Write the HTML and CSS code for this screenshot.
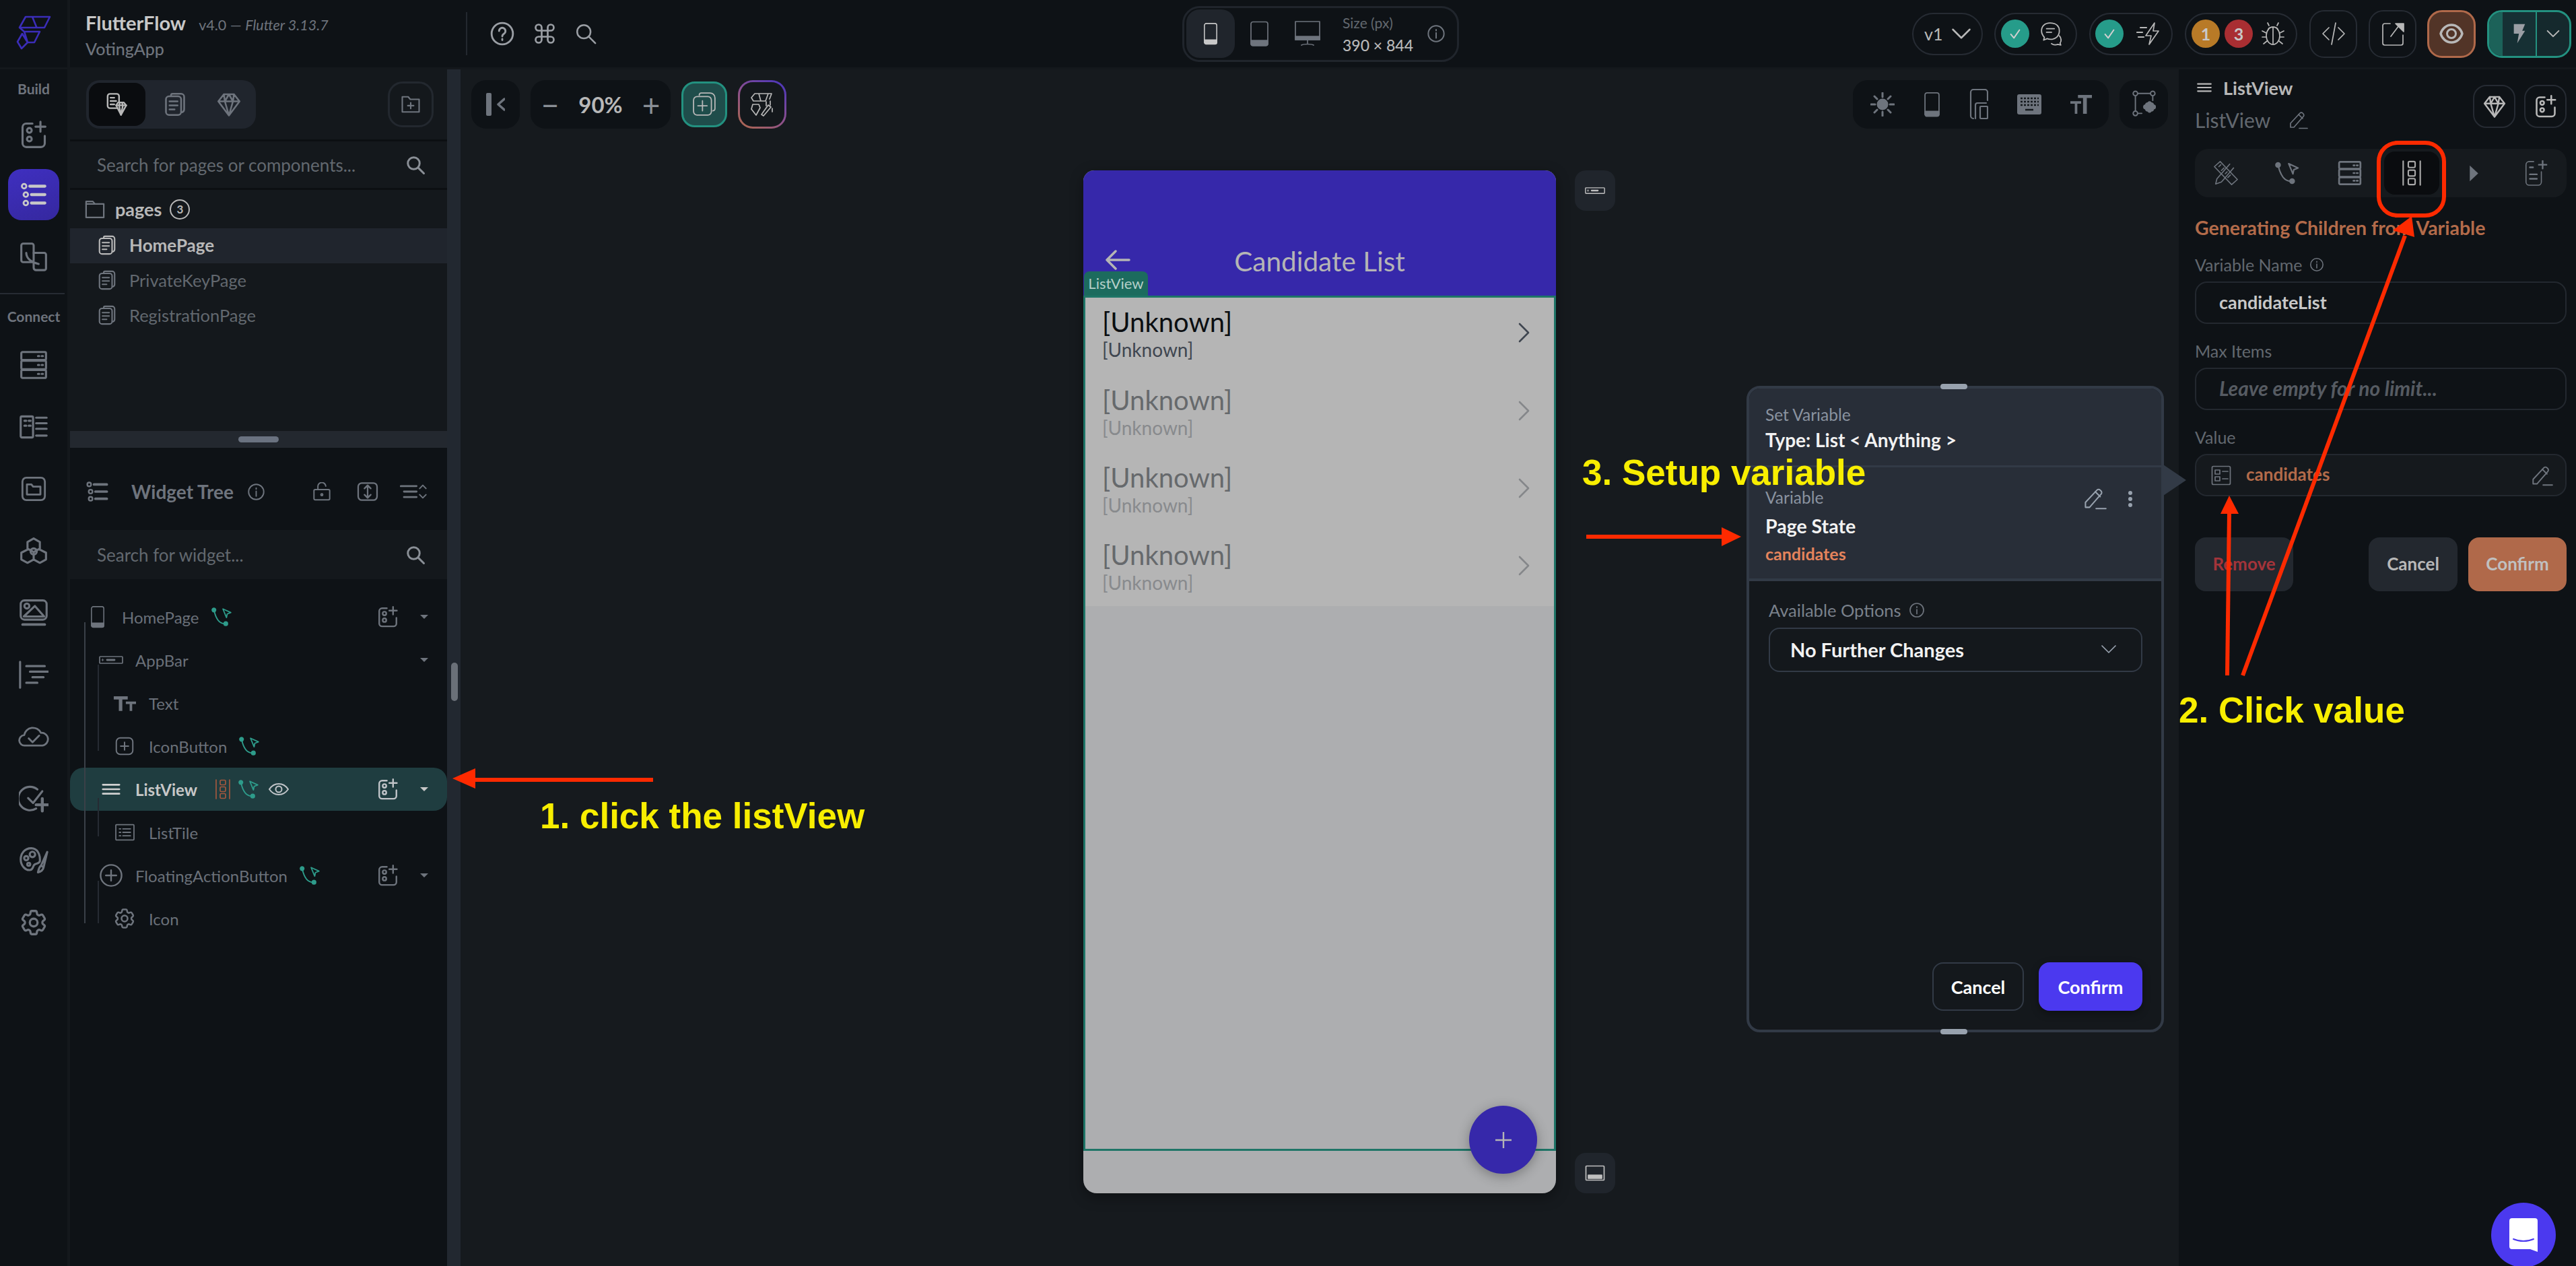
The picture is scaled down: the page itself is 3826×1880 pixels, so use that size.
FILE: index.html
```html
<!DOCTYPE html>
<html lang="en">
<head>
  <meta charset="UTF-8">
  <title>FlutterFlow - VotingApp</title>
  <link rel="stylesheet" href="styles.css">
</head>
<body>

<!-- icon set -->
<svg class="sprite" xmlns="http://www.w3.org/2000/svg">
  <symbol id="i-add" viewBox="0 0 24 24"><path d="M11 3H6a3 3 0 0 0-3 3v13a3 3 0 0 0 3 3h12a3 3 0 0 0 3-3v-6"/><path d="M17.5 1.5v8M13.5 5.5h8"/><circle cx="8.5" cy="8.5" r="1.9"/><circle cx="8.5" cy="15.5" r="1.9"/></symbol>
  <symbol id="i-listdots" viewBox="0 0 24 24"><circle cx="3.5" cy="4.5" r="2"/><circle cx="5" cy="12" r="2"/><circle cx="5" cy="19.5" r="2"/><path d="M8.5 4.5H22M10 12h12M10 19.5h12" stroke-width="2.6"/></symbol>
  <symbol id="i-board" viewBox="0 0 24 24"><rect x="2" y="1.5" width="10" height="15" rx="1.5"/><path d="M12 9h8.5a1.5 1.5 0 0 1 1.5 1.5v11a1.5 1.5 0 0 1-1.5 1.5H14a2 2 0 0 1-2-2v-4"/><path d="M6 9c0 5 5 8 10 9"/></symbol>
  <symbol id="i-db" viewBox="0 0 24 24"><rect x="2" y="1.5" width="20" height="6.5" rx="1"/><rect x="2" y="8.5" width="20" height="7" rx="1"/><rect x="2" y="16" width="20" height="6.5" rx="1"/><path d="M15.5 4.8h1M18.5 4.8h1M15.5 12h1M18.5 12h1M15.5 19.2h1M18.5 19.2h1"/></symbol>
  <symbol id="i-form" viewBox="0 0 24 24"><rect x="1.5" y="3.5" width="10" height="17" rx="1"/><path d="M4.500 7h1.5M8 7h1.5M4.500 11h1.5M8 11h1.5M14 4.500h8.5M14 9h8.5M14 13.5h8.5M14 19h8.5"/></symbol>
  <symbol id="i-folderbox" viewBox="0 0 24 24"><rect x="2" y="2" width="20" height="20" rx="3.5"/><path d="M6 8h4l1.5 2H18v7H6z"/></symbol>
  <symbol id="i-hex" viewBox="0 0 24 24"><path d="M12 2l5 2.8v5.400l-5 2.8-5-2.8V4.8zM7 11l-5 2.5v5.500l5 2.700 5-2.700M17 11l5 2.5v5.500l-5 2.700-5-2.700v-5.500"/><circle cx="12" cy="12.5" r="2.5"/></symbol>
  <symbol id="i-image" viewBox="0 0 24 24"><rect x="1.5" y="2" width="21" height="15.5" rx="3"/><circle cx="6.5" cy="6.5" r="2"/><path d="M4 15L13 6.5 20.5 15z"/><path d="M3 21.5h18" stroke-width="2"/></symbol>
  <symbol id="i-align" viewBox="0 0 24 24"><path d="M1 1.5v21M6 5h15M9 9.5h15M11 14h9M6 18.5h9"/></symbol>
  <symbol id="i-cloud" viewBox="0 0 28 24"><path d="M7 20H6a4.700 4.700 0 0 1-.6-9.400A8 8 0 0 1 20.5 8.5a5.8 5.8 0 0 1 1.5 11.5z"/><path d="M9.5 13.5l3.5 3.5 6-6"/></symbol>
  <symbol id="i-checkplus" viewBox="0 0 24 24"><path d="M15 4.5A9.5 9.5 0 1 0 14 20"/><path d="M7.5 11.5l4 4L19 6"/><path d="M19 12v10M14 17h10" stroke-width="2.4"/></symbol>
  <symbol id="i-palette" viewBox="0 0 24 24"><path d="M10 2C4.5 2 1.5 6.5 1.5 11c0 5 4 9.5 8 8.5 2.5-.6 1.5-3.5 3.5-4.5s3.5-.5 4-2.5C17.5 7 15 2 10 2z"/><circle cx="11" cy="7" r="2.2"/><circle cx="6" cy="10" r="1.7"/><circle cx="8" cy="15" r="1.2"/><path d="M23 5l-5 11 2 1.5zM18 16c-1.5 1-2 3-2.5 5.500 2-.5 4-1.5 4.500-4"/></symbol>
  <symbol id="i-gear" viewBox="0 0 24 24"><path d="M9.594 3.94c.09-.542.56-.94 1.11-.94h2.593c.55 0 1.02.398 1.11.94l.213 1.281c.063.374.313.686.645.87.074.04.147.083.22.127.324.196.72.257 1.075.124l1.217-.456a1.125 1.125 0 011.37.49l1.296 2.247a1.125 1.125 0 01-.26 1.431l-1.003.827c-.293.24-.438.613-.431.992a6.759 6.759 0 010 .255c-.007.378.138.75.43.99l1.005.828c.424.35.534.954.26 1.43l-1.298 2.247a1.125 1.125 0 01-1.369.491l-1.217-.456c-.355-.133-.75-.072-1.076.124a6.57 6.57 0 01-.22.128c-.331.183-.581.495-.644.869l-.213 1.28c-.09.543-.56.941-1.11.941h-2.594c-.55 0-1.02-.398-1.11-.94l-.213-1.281c-.062-.374-.312-.686-.644-.87a6.52 6.52 0 01-.22-.127c-.325-.196-.72-.257-1.076-.124l-1.217.456a1.125 1.125 0 01-1.369-.49l-1.297-2.247a1.125 1.125 0 01.26-1.431l1.004-.827c.292-.24.437-.613.43-.992a6.932 6.932 0 010-.255c.007-.378-.138-.75-.43-.99l-1.004-.828a1.125 1.125 0 01-.26-1.43l1.297-2.247a1.125 1.125 0 011.37-.491l1.216.456c.356.133.751.072 1.076-.124.072-.044.146-.087.22-.128.332-.183.582-.495.644-.869l.214-1.281z"/><circle cx="12" cy="12" r="3"/></symbol>
  <symbol id="i-search" viewBox="0 0 24 24"><circle cx="10" cy="10" r="7"/><path d="M15.5 15.5L22 22"/></symbol>
  <symbol id="i-info" viewBox="0 0 24 24"><circle cx="12" cy="12" r="10"/><path d="M12 11v6.5M12 6.8v1.4"/></symbol>
  <symbol id="i-help" viewBox="0 0 24 24"><circle cx="12" cy="12" r="10"/><path d="M9 9.5a3 3 0 1 1 4.5 2.6c-1 .6-1.5 1.2-1.5 2.4M12 17v1"/></symbol>
  <symbol id="i-cmd" viewBox="0 0 24 24"><path d="M9 9h6v6H9zM9 9V6a3 3 0 1 0-3 3zM15 9h3a3 3 0 1 0-3-3zM9 15H6a3 3 0 1 0 3 3zM15 15v3a3 3 0 1 0 3-3z"/></symbol>
  <symbol id="i-pagegem" viewBox="0 0 24 24"><rect x="2" y="1" width="12" height="15" rx="2.5"/><path d="M5 5h4M5 8.5h6M5 12h4"/><path class="fill-bg" d="M11 13l2-3h6l2.5 3-5.5 10z"/><path d="M11 13h10.5M15 10l-1 3 2 10 2-10-1-3"/></symbol>
  <symbol id="i-pages" viewBox="0 0 24 24"><path d="M8 3.5V3a1.5 1.5 0 0 1 1.5-1.5H18a3 3 0 0 1 3 3V17a3 3 0 0 1-2 2.8"/><rect x="3" y="4" width="15" height="18.5" rx="3"/><path d="M6.5 9h8M6.5 13h8M6.5 17h5"/></symbol>
  <symbol id="i-gem" viewBox="0 0 24 24"><path d="M7 2h10l5.5 7L12 23 1.5 9zM1.5 9h21M7 2l1 7 4 14 4-14 1-7M8 9l4-7 4 7"/></symbol>
  <symbol id="i-folderplus" viewBox="0 0 24 24"><path d="M2 3h7l2.5 3H22v15H2z"/><path d="M12 10v7M8.5 13.5h7"/></symbol>
  <symbol id="i-folder" viewBox="0 0 24 24"><path d="M1.5 2.5h8l2.5 3h10.5v16h-21z"/><path d="M1.5 5.5H12"/></symbol>
  <symbol id="i-lock" viewBox="0 0 24 24"><path d="M7 9V6a5 5 0 0 1 10-1"/><rect x="2" y="9.5" width="20" height="13" rx="1.5"/><circle cx="12" cy="16" r="1.2"/></symbol>
  <symbol id="i-expand" viewBox="0 0 24 24"><rect x="1.5" y="2.5" width="21" height="19" rx="4"/><path d="M12 5v14M8.5 8.5L12 5l3.5 3.5M8.5 15.5L12 19l3.5-3.5"/></symbol>
  <symbol id="i-collapse" viewBox="0 0 34 24"><path d="M1 5h20M5 12h16M5 19h16" stroke-width="2.4"/><path d="M25 8l4-4 4 4M25 16l4 4 4-4"/></symbol>
  <symbol id="i-phone" viewBox="0 0 24 36"><rect x="2" y="1.5" width="20" height="33" rx="3"/><path class="fill-cur" d="M2 28h20v4a3 3 0 0 1-3 3H5a3 3 0 0 1-3-3z"/></symbol>
  <symbol id="i-appbar" viewBox="0 0 36 12"><rect x="1" y="1" width="34" height="10" rx="1"/><path d="M12 6h11" stroke-width="2.8"/><path d="M4 6h3M5.5 4.5v3" stroke-width="1"/></symbol>
  <symbol id="i-text" viewBox="0 0 36 24"><path class="fill-cur" stroke="none" d="M1 1h22v5h-8.5v18h-5.5V6H1zM20 9h16v4h-6v11h-4V13h-6z"/></symbol>
  <symbol id="i-plusbox" viewBox="0 0 24 24"><rect x="1.5" y="1.5" width="21" height="21" rx="5"/><path d="M12 7v10M7 12h10"/></symbol>
  <symbol id="i-pluscircle" viewBox="0 0 24 24"><circle cx="12" cy="12" r="11"/><path d="M12 6.5v11M6.5 12h11"/></symbol>
  <symbol id="i-lines" viewBox="0 0 24 18"><path d="M1 3h22M1 9h22M1 15h22" stroke-width="2.4"/></symbol>
  <symbol id="i-listgen" viewBox="0 0 24 30"><path d="M2 1v28M22 1v28"/><rect x="8" y="1.5" width="8" height="7" rx="1.5"/><rect x="8" y="11.5" width="8" height="7" rx="1.5"/><rect x="8" y="21.5" width="8" height="7" rx="1.5"/></symbol>
  <symbol id="i-connect" viewBox="0 0 30 26"><circle class="fill-cur" cx="3.5" cy="3.5" r="2.5"/><circle class="fill-cur" cx="20" cy="22.5" r="2.5"/><path d="M4 5c1 5 2.5 9 5.5 13 2 2.5 5 4.5 9 4.5"/><path d="M16 2l11 5-5 2-1 5z"/></symbol>
  <symbol id="i-eye" viewBox="0 0 30 20"><path d="M1 10c4-6 9-8 14-8s10 2 14 8c-4 6-9 8-14 8S5 16 1 10z"/><circle cx="15" cy="10" r="4.5"/></symbol>
  <symbol id="i-listtile" viewBox="0 0 28 24"><rect x="1" y="1" width="26" height="22" rx="1"/><path d="M6 7h2M6 12h2M6 17h2M11 7h11M11 12h11M11 17h11"/></symbol>
  <symbol id="i-edit" viewBox="0 0 28 28"><path d="M2 25v-6L16 4a2.8 2.8 0 0 1 4 0l1 1a2.8 2.8 0 0 1 0 4L7 25z"/><path d="M14 6l6 6M15 26.5h12"/></symbol>
  <symbol id="i-check" viewBox="0 0 24 24"><path d="M5 13l5 6 9-13"/></symbol>
  <symbol id="i-chat" viewBox="0 0 34 34"><path d="M15 2C7 2 3 7 3 13c0 4 2 7 4 9l-1 4 5-2c2 1 3 1 5 1 7 0 12-5 12-12C28 6 23 2 15 2z"/><path d="M10 10h11M10 15h7"/><path d="M28 20c3 3 3 8 1 10l1 3-4-1c-3 1-6 1-9-1"/></symbol>
  <symbol id="i-bolt" viewBox="0 0 36 34"><path d="M27 1L14 20h8l-3 13 14-20h-8z"/><path d="M6 8h9M1 15h8M3 22h8" stroke-width="2.2"/></symbol>
  <symbol id="i-bug" viewBox="0 0 34 36"><ellipse cx="17" cy="21" rx="10" ry="13"/><path d="M17 9v25M10 12c0-5 14-5 14 0M11 6L9 2M23 6l2-4M7 17l-6-3M27 17l6-3M7 23H1M27 23h6M8 29l-5 4M26 29l5 4"/></symbol>
  <symbol id="i-code" viewBox="0 0 36 36"><path d="M11 9L2 18l9 9M25 9l9 9-9 9M21 2l-6 32"/></symbol>
  <symbol id="i-share" viewBox="0 0 36 36"><path d="M14 3H6a3 3 0 0 0-3 3v26a3 3 0 0 0 3 3h24a3 3 0 0 0 3-3V20"/><path d="M15 22L27 6"/><path class="fill-cur" d="M22 3h12v12z"/></symbol>
  <symbol id="i-watch" viewBox="0 0 36 36"><path d="M18 5c8 0 14 6 16 13-2 7-8 13-16 13S4 25 2 18C4 11 10 5 18 5z" stroke-width="3.5"/><circle cx="18" cy="18" r="6.5" stroke-width="3"/></symbol>
  <symbol id="i-flash" viewBox="0 0 24 36"><path class="fill-cur" stroke="none" d="M2 1h20l-5 12h5L8 35l3-17H2z"/></symbol>
  <symbol id="i-chevdown" viewBox="0 0 24 14"><path d="M2 2l10 10L22 2"/></symbol>
  <symbol id="i-tablet" viewBox="0 0 28 38"><rect x="1.5" y="1.5" width="25" height="35" rx="3"/><path class="fill-cur" d="M1.5 29h25v5a3 3 0 0 1-3 3h-19a3 3 0 0 1-3-3z"/></symbol>
  <symbol id="i-desktop" viewBox="0 0 38 38"><rect x="1" y="1" width="36" height="27"/><path class="fill-cur" d="M1 23h36v5H1z"/><path d="M19 28v5M10 36c3-2 15-2 18 0"/></symbol>
  <symbol id="i-collapse-left" viewBox="0 0 28 34"><rect class="fill-cur" stroke="none" x="0" y="0" width="8" height="34" rx="2"/><path d="M27 9l-9 8 9 8" stroke-width="3.5"/></symbol>
  <symbol id="i-duplicate" viewBox="0 0 34 34"><path d="M10 4V3.5A2.5 2.5 0 0 1 12.5 1H25a7 7 0 0 1 7 7v15a3 3 0 0 1-3 3"/><rect x="2" y="6" width="25" height="26" rx="5"/><path d="M14.5 12v14M8 19h13"/></symbol>
  <symbol id="i-aiwand" viewBox="0 0 36 36"><path d="M7 2h20l-4 11H5L2 8zM13 2l3 11M24 2l8 0-3 8"/><path d="M4 18h9l2 5-6 11-7-9z"/><path d="M17 33l10-14 4 3-11 13z"/><path d="M24 14v6M30 13v6M33 24v5"/></symbol>
  <symbol id="i-sun" viewBox="0 0 36 36"><circle class="fill-cur" stroke="none" cx="18" cy="18" r="8.5"/><path d="M18 1v6M18 29v6M1 18h6M29 18h6M6 6l4 4M26 26l4 4M6 30l4-4M26 10l4-4" stroke-width="3"/></symbol>
  <symbol id="i-responsive" viewBox="0 0 28 46"><path d="M6 44a4 4 0 0 1-4-4V5a4 4 0 0 1 4-4h17a4 4 0 0 1 4 4v12"/><path d="M9 44V24a3 3 0 0 1 3-3h13"/><rect x="16" y="26" width="11" height="18" rx="1"/></symbol>
  <symbol id="i-keyboard" viewBox="0 0 36 30"><rect class="fill-cur" stroke="none" width="36" height="30" rx="3"/><path class="key-holes" d="M5 6h3M10 6h3M15 6h3M20 6h3M25 6h3M30 6h2M5 11h3M10 11h3M15 11h3M20 11h3M25 11h3M30 11h2M5 16h3M10 16h3M15 16h3M20 16h3M25 16h3M30 16h2M12 23h12"/></symbol>
  <symbol id="i-textsize" viewBox="0 0 34 30"><path class="fill-cur" stroke="none" d="M12 0h22v5h-8v25h-6V5h-8zM0 10h17v4h-6v16H7V14H0z"/></symbol>
  <symbol id="i-nodes" viewBox="0 0 36 44"><circle cx="5" cy="5" r="3.5"/><circle cx="32" cy="5" r="3.5"/><circle cx="5" cy="36" r="3.5"/><path d="M8.5 5H28M5 9v23M9 36h6M32 9v7"/><path class="fill-cur" d="M25 20a2 2 0 0 1 4 0 3 3 0 0 1 4 3 3 3 0 0 1 0 6 3 3 0 0 1-4 3 2 2 0 0 1-4 0 3 3 0 0 1-4-3 3 3 0 0 1 0-6 3 3 0 0 1 4-3z"/></symbol>
  <symbol id="i-ruler" viewBox="0 0 40 40"><path d="M2 10l9-8 27 28-9 8z"/><path d="M12 7l-3 3M17 12l-4 4M22 18l-3 3M27 23l-4 4"/><path d="M26 6L6 29l-2 8 9-3 19-22"/></symbol>
  <symbol id="i-play" viewBox="0 0 20 36"><path class="fill-cur" stroke="none" d="M1 1l18 17L1 35z"/></symbol>
  <symbol id="i-docadd" viewBox="0 0 36 40"><path d="M15 2H8a5 5 0 0 0-5 5v27a5 5 0 0 0 5 5h14a5 5 0 0 0 5-5V18"/><path d="M29 1v12M23 7h12" stroke-width="2.5"/><path d="M9 11h5M9 22h11M9 29h11" stroke-width="2.5"/></symbol>
  <symbol id="i-vartable" viewBox="0 0 30 30"><rect x="1.5" y="1.5" width="27" height="27" rx="2"/><rect x="6" y="7" width="7" height="6"/><rect x="6" y="17" width="7" height="6"/><path d="M17 9h8M17 20h8"/></symbol>
</svg>

<div class="app">

  <header class="topbar">
    <div class="logo-cell">
      <svg class="logo" viewBox="0 0 48 48"><path d="M12 1h36l-8 16H3zM22 1l6.500 16M10 23h23l-8 16H15zM0 38l7-12 8 13-9 9zM10 23l-7-6"/></svg>
    </div>
    <div class="brand">
      <div class="brand-title"><b>FlutterFlow</b><span class="brand-ver">v4.0 — <i>Flutter 3.13.7</i></span></div>
      <div class="brand-project">VotingApp</div>
    </div>
    <div class="top-tools">
      <svg class="ic ic-38"><use href="#i-help"/></svg>
      <svg class="ic ic-36 thick"><use href="#i-cmd"/></svg>
      <svg class="ic ic-34 thick"><use href="#i-search"/></svg>
    </div>
    <div class="device-group">
      <div class="device-btn active"><svg class="ic ic-dev-phone"><use href="#i-phone"/></svg></div>
      <div class="device-btn"><svg class="ic ic-dev-tablet"><use href="#i-tablet"/></svg></div>
      <div class="device-btn"><svg class="ic ic-dev-desk"><use href="#i-desktop"/></svg></div>
      <div class="device-size"><span>Size (px)</span><b>390 × 844</b></div>
      <svg class="ic ic-28"><use href="#i-info"/></svg>
    </div>
    <div class="top-right">
      <div class="pill pill-version"><span>v1</span><svg class="ic ic-chev"><use href="#i-chevdown"/></svg></div>
      <div class="pill pill-chat">
        <span class="dot dot-teal"><svg class="ic ic-22"><use href="#i-check"/></svg></span>
        <svg class="ic ic-36"><use href="#i-chat"/></svg>
      </div>
      <div class="pill pill-bolt">
        <span class="dot dot-teal"><svg class="ic ic-22"><use href="#i-check"/></svg></span>
        <svg class="ic ic-36"><use href="#i-bolt"/></svg>
      </div>
      <div class="pill pill-bug">
        <span class="dot dot-orange">1</span>
        <span class="dot dot-red">3</span>
        <svg class="ic ic-36"><use href="#i-bug"/></svg>
      </div>
      <div class="square"><svg class="ic ic-36"><use href="#i-code"/></svg></div>
      <div class="square square-share"><svg class="ic ic-36"><use href="#i-share"/></svg></div>
      <div class="square square-eye"><svg class="ic ic-36"><use href="#i-watch"/></svg></div>
      <div class="run-btn">
        <div class="run-strip"></div>
        <div class="run-bolt"><svg class="ic ic-flash"><use href="#i-flash"/></svg></div>
        <div class="run-more"><svg class="ic ic-run-chev"><use href="#i-chevdown"/></svg></div>
      </div>
    </div>
  </header>

  <div class="main">

    <nav class="rail">
      <div class="rail-label rail-build">Build</div>
      <div class="rail-item rail-add"><svg class="ic ic-44"><use href="#i-add"/></svg></div>
      <div class="rail-active"><svg class="ic ic-44"><use href="#i-listdots"/></svg></div>
      <div class="rail-item rail-board"><svg class="ic ic-44"><use href="#i-board"/></svg></div>
      <div class="rail-rule"></div>
      <div class="rail-label rail-connect">Connect</div>
      <div class="rail-item"><svg class="ic ic-44"><use href="#i-db"/></svg></div>
      <div class="rail-item"><svg class="ic ic-44"><use href="#i-form"/></svg></div>
      <div class="rail-item"><svg class="ic ic-40"><use href="#i-folderbox"/></svg></div>
      <div class="rail-item"><svg class="ic ic-44"><use href="#i-hex"/></svg></div>
      <div class="rail-item"><svg class="ic ic-44"><use href="#i-image"/></svg></div>
      <div class="rail-item"><svg class="ic ic-44"><use href="#i-align"/></svg></div>
      <div class="rail-item"><svg class="ic ic-cloud"><use href="#i-cloud"/></svg></div>
      <div class="rail-item"><svg class="ic ic-44"><use href="#i-checkplus"/></svg></div>
      <div class="rail-item"><svg class="ic ic-44"><use href="#i-palette"/></svg></div>
      <div class="rail-item"><svg class="ic ic-46"><use href="#i-gear"/></svg></div>
    </nav>

    <aside class="left-panel">
      <section class="pages-section">
        <div class="pages-tabs">
          <div class="seg">
            <div class="seg-btn active"><svg class="ic ic-34"><use href="#i-pagegem"/></svg></div>
            <div class="seg-btn"><svg class="ic ic-36"><use href="#i-pages"/></svg></div>
            <div class="seg-btn"><svg class="ic ic-36"><use href="#i-gem"/></svg></div>
          </div>
          <div class="folder-btn"><svg class="ic ic-30"><use href="#i-folderplus"/></svg></div>
        </div>
        <div class="search-row">
          <span>Search for pages or components...</span>
          <svg class="ic ic-30 thick"><use href="#i-search"/></svg>
        </div>
        <div class="pages-head">
          <svg class="ic ic-folder"><use href="#i-folder"/></svg>
          <b>pages</b>
          <span class="count">3</span>
        </div>
        <div class="page-row active"><svg class="ic ic-30"><use href="#i-pages"/></svg>HomePage</div>
        <div class="page-row"><svg class="ic ic-30"><use href="#i-pages"/></svg>PrivateKeyPage</div>
        <div class="page-row"><svg class="ic ic-30"><use href="#i-pages"/></svg>RegistrationPage</div>
      </section>

      <div class="split"><span></span></div>

      <section class="tree-section">
        <div class="tree-head">
          <svg class="ic ic-tree"><use href="#i-listdots"/></svg>
          <span class="tree-title">Widget Tree</span>
          <svg class="ic ic-27"><use href="#i-info"/></svg>
          <span class="tree-head-tools">
            <svg class="ic ic-28"><use href="#i-lock"/></svg>
            <svg class="ic ic-32"><use href="#i-expand"/></svg>
            <svg class="ic ic-collapse"><use href="#i-collapse"/></svg>
          </span>
        </div>
        <div class="search-row search-widget">
          <span>Search for widget...</span>
          <svg class="ic ic-30 thick"><use href="#i-search"/></svg>
        </div>
        <div class="tree">
          <div class="tree-row lv0">
            <span class="tree-ic"><svg class="ic ic-tree-phone"><use href="#i-phone"/></svg></span>
            HomePage
            <svg class="ic ic-flow"><use href="#i-connect"/></svg>
            <span class="row-end"><svg class="ic ic-row-add"><use href="#i-add"/></svg><i class="caret"></i></span>
          </div>
          <div class="tree-row lv1">
            <span class="tree-ic"><svg class="ic ic-appbar"><use href="#i-appbar"/></svg></span>
            AppBar
            <span class="row-end"><i class="caret"></i></span>
          </div>
          <div class="tree-row lv2">
            <span class="tree-ic"><svg class="ic ic-tt"><use href="#i-text"/></svg></span>
            Text
          </div>
          <div class="tree-row lv2">
            <span class="tree-ic"><svg class="ic ic-28"><use href="#i-plusbox"/></svg></span>
            IconButton
            <svg class="ic ic-flow"><use href="#i-connect"/></svg>
          </div>
          <div class="tree-row lv1 active">
            <span class="tree-ic"><svg class="ic ic-lines"><use href="#i-lines"/></svg></span>
            ListView
            <svg class="ic ic-gen"><use href="#i-listgen"/></svg>
            <svg class="ic ic-flow flow-near"><use href="#i-connect"/></svg>
            <svg class="ic ic-row-eye"><use href="#i-eye"/></svg>
            <span class="row-end"><svg class="ic ic-row-add"><use href="#i-add"/></svg><i class="caret"></i></span>
          </div>
          <div class="tree-row lv2">
            <span class="tree-ic"><svg class="ic ic-tile"><use href="#i-listtile"/></svg></span>
            ListTile
          </div>
          <div class="tree-row lv1">
            <span class="tree-ic"><svg class="ic ic-34"><use href="#i-pluscircle"/></svg></span>
            FloatingActionButton
            <svg class="ic ic-flow"><use href="#i-connect"/></svg>
            <span class="row-end"><svg class="ic ic-row-add"><use href="#i-add"/></svg><i class="caret"></i></span>
          </div>
          <div class="tree-row lv2">
            <span class="tree-ic"><svg class="ic ic-36"><use href="#i-gear"/></svg></span>
            Icon
          </div>
          <i class="tree-line line-root"></i>
          <i class="tree-line line-a"></i>
          <i class="tree-line line-b"></i>
          <i class="tree-line line-c"></i>
        </div>
      </section>
    </aside>

    <div class="gutter"><span></span></div>

    <main class="canvas">
      <div class="canvas-tools">
        <div class="tool-box tool-collapse"><svg class="ic ic-collapse-left"><use href="#i-collapse-left"/></svg></div>
        <div class="tool-box tool-zoom"><span class="zoom-sign">−</span><b>90%</b><span class="zoom-sign">+</span></div>
        <div class="tool-dup"><svg class="ic ic-36"><use href="#i-duplicate"/></svg></div>
        <div class="tool-ai"><div class="tool-ai-in"><svg class="ic ic-36"><use href="#i-aiwand"/></svg></div></div>
        <div class="tool-box tool-preview">
          <svg class="ic ic-sun"><use href="#i-sun"/></svg>
          <svg class="ic ic-dev-tablet2"><use href="#i-phone"/></svg>
          <svg class="ic ic-resp"><use href="#i-responsive"/></svg>
          <svg class="ic ic-kb"><use href="#i-keyboard"/></svg>
          <svg class="ic ic-ts"><use href="#i-textsize"/></svg>
        </div>
        <div class="tool-box tool-nodes"><svg class="ic ic-nodes"><use href="#i-nodes"/></svg></div>
      </div>

      <div class="stage">
        <div class="phone">
          <div class="appbar">
            <svg class="back" viewBox="0 0 38 30"><path d="M36 15H3M16 2L3 15l13 13"/></svg>
            <div class="appbar-title">Candidate List</div>
            <div class="listview-tag">ListView</div>
          </div>
          <div class="list-frame">
            <div class="list-rows">
              <div class="list-item">
                <div><div class="item-title">[Unknown]</div><div class="item-sub">[Unknown]</div></div>
                <svg class="chev" viewBox="0 0 18 30"><path d="M2 2l13 13L2 28"/></svg>
              </div>
              <div class="list-item dim">
                <div><div class="item-title">[Unknown]</div><div class="item-sub">[Unknown]</div></div>
                <svg class="chev" viewBox="0 0 18 30"><path d="M2 2l13 13L2 28"/></svg>
              </div>
              <div class="list-item dim">
                <div><div class="item-title">[Unknown]</div><div class="item-sub">[Unknown]</div></div>
                <svg class="chev" viewBox="0 0 18 30"><path d="M2 2l13 13L2 28"/></svg>
              </div>
              <div class="list-item dim">
                <div><div class="item-title">[Unknown]</div><div class="item-sub">[Unknown]</div></div>
                <svg class="chev" viewBox="0 0 18 30"><path d="M2 2l13 13L2 28"/></svg>
              </div>
            </div>
          </div>
          <div class="fab"><svg viewBox="0 0 26 26"><path d="M13 1v24M1 13h24"/></svg></div>
        </div>
        <div class="side-btns">
          <div class="side-btn"><svg class="ic ic-appbar2"><use href="#i-appbar"/></svg></div>
          <div class="side-btn"><svg class="ic ic-botbar" viewBox="0 0 30 24"><rect x="1.5" y="1.5" width="27" height="21" rx="1"/><path class="fill-cur" d="M5 15h20v5H5z"/></svg></div>
        </div>
      </div>

      <div class="popover">
        <i class="pop-handle pop-handle-top"></i>
        <i class="pop-caret"></i>
        <div class="pop-head">
          <div class="pop-small">Set Variable</div>
          <div class="pop-type">Type: List &lt; Anything &gt;</div>
        </div>
        <div class="pop-var">
          <div>
            <div class="pop-small">Variable</div>
            <div class="pop-state">Page State</div>
            <div class="pop-name">candidates</div>
          </div>
          <div class="pop-var-tools">
            <svg class="ic ic-34"><use href="#i-edit"/></svg>
            <span class="dots"><i></i><i></i><i></i></span>
          </div>
        </div>
        <div class="pop-body">
          <div class="pop-label">Available Options <svg class="ic ic-24"><use href="#i-info"/></svg></div>
          <div class="pop-select"><span>No Further Changes</span><svg class="ic ic-pop-chev"><use href="#i-chevdown"/></svg></div>
          <div class="pop-actions">
            <div class="btn btn-outline">Cancel</div>
            <div class="btn btn-primary">Confirm</div>
          </div>
        </div>
        <i class="pop-handle pop-handle-bottom"></i>
      </div>
    </main>

    <aside class="right-panel">
      <div class="rp-head">
        <div>
          <div class="rp-kind"><svg class="ic ic-rp-lines"><use href="#i-lines"/></svg><b>ListView</b></div>
          <div class="rp-name">ListView <svg class="ic ic-28"><use href="#i-edit"/></svg></div>
        </div>
        <div class="rp-head-btns">
          <div class="rp-btn"><svg class="ic ic-34"><use href="#i-gem"/></svg></div>
          <div class="rp-btn"><svg class="ic ic-36"><use href="#i-add"/></svg></div>
        </div>
      </div>
      <div class="rp-tabs">
        <div class="rp-tab"><svg class="ic ic-rp"><use href="#i-ruler"/></svg></div>
        <div class="rp-tab"><svg class="ic ic-rp"><use href="#i-connect"/></svg></div>
        <div class="rp-tab"><svg class="ic ic-rp"><use href="#i-db"/></svg></div>
        <div class="rp-tab active"><svg class="ic ic-rp"><use href="#i-listgen"/></svg></div>
        <div class="rp-tab"><svg class="ic ic-play"><use href="#i-play"/></svg></div>
        <div class="rp-tab"><svg class="ic ic-rp"><use href="#i-docadd"/></svg></div>
      </div>
      <h3 class="rp-heading">Generating Children from Variable</h3>
      <div class="rp-label rp-label-first">Variable Name <svg class="ic ic-22"><use href="#i-info"/></svg></div>
      <div class="field"><b>candidateList</b></div>
      <div class="rp-label">Max Items</div>
      <div class="field"><b class="ph">Leave empty for no limit...</b></div>
      <div class="rp-label">Value</div>
      <div class="field field-value">
        <svg class="ic ic-30"><use href="#i-vartable"/></svg>
        <span class="value-name">candidates</span>
        <svg class="ic ic-32 field-edit"><use href="#i-edit"/></svg>
      </div>
      <div class="rp-actions">
        <div class="rp-btn-lg rp-remove">Remove</div>
        <div class="rp-btn-lg rp-cancel">Cancel</div>
        <div class="rp-btn-lg rp-confirm">Confirm</div>
      </div>
    </aside>
  </div>

  <!-- tutorial notes drawn on top of the screenshot -->
  <svg class="notes-layer" viewBox="0 0 3826 1880">
    <rect class="note-box" x="3533" y="212" width="97" height="108" rx="28"/>
    <path class="note-line" d="M970 1158H700"/>
    <path class="note-head" d="M672 1156l34-15v30z"/>
    <path class="note-line" d="M2356 797H2560"/>
    <path class="note-head" d="M2586 797l-29-14v28z"/>
    <path class="note-line" d="M3308 1003L3311 760"/>
    <path class="note-head" d="M3311 736l14 27h-27z"/>
    <path class="note-line" d="M3331 1003L3572 350"/>
    <path class="note-head" d="M3582 321l4 31-32-10z"/>
  </svg>
  <div class="note note-1">1. click the listView</div>
  <div class="note note-2">2. Click value</div>
  <div class="note note-3">3. Setup variable</div>

  <div class="intercom">
    <svg viewBox="0 0 42 50"><path d="M4 0h34a4 4 0 0 1 4 4v46l-11-4H4a4 4 0 0 1-4-4V4a4 4 0 0 1 4-4z" fill="#fff"/><path d="M6 31c9 4 21 4 30 0" fill="none" stroke="#4b39ef" stroke-width="2" stroke-linecap="round"/></svg>
  </div>
</div>

</body>
</html>
```

FILE: styles.css
```css
/* page */
html, body {
  margin: 0;
  padding: 0;
  background: #0e1216;
}
body {
  font-family: Lato, "Noto Sans", sans-serif;
  color: #c8c8c8;
}
.sprite {
  position: absolute;
  width: 0;
  height: 0;
}
.app {
  position: relative;
  width: 3826px;
  height: 1880px;
  display: flex;
  flex-direction: column;
  overflow: hidden;
}

/* icons */
.ic {
  flex: none;
  fill: none;
  stroke: currentColor;
  stroke-width: 1.7;
  stroke-linecap: round;
  stroke-linejoin: round;
  color: #6e747d;
}
.thick { stroke-width: 2.4; color: #8a8f96; }
.fill-cur { fill: currentColor; }
.fill-bg { fill: #0a0c0f; }
.key-holes { stroke: #14181c; stroke-width: 2.4; stroke-linecap: butt; }
.ic-22 { width: 22px; height: 22px; }
.ic-24 { width: 24px; height: 24px; }
.ic-27 { width: 27px; height: 27px; }
.ic-28 { width: 28px; height: 28px; }
.ic-30 { width: 30px; height: 30px; }
.ic-32 { width: 32px; height: 32px; }
.ic-34 { width: 34px; height: 34px; }
.ic-36 { width: 36px; height: 36px; }
.ic-38 { width: 38px; height: 38px; }
.ic-40 { width: 40px; height: 40px; }
.ic-44 { width: 44px; height: 44px; }
.ic-46 { width: 46px; height: 46px; }

/* top bar */
.topbar {
  flex: none;
  height: 100px;
  display: flex;
  align-items: center;
  background: #0e1216;
  border-bottom: 3px solid #14181c;
}
.logo-cell {
  flex: none;
  box-sizing: border-box;
  width: 104px;
  height: 100px;
  border-right: 4px solid #14181c;
  padding: 24px 0 0 26px;
}
.logo {
  display: block;
  width: 48px;
  height: 48px;
  fill: none;
  stroke: #3b2db8;
  stroke-width: 2.6;
  stroke-linejoin: round;
  overflow: visible;
}
.brand {
  flex: none;
  box-sizing: border-box;
  width: 588px;
  padding-left: 23px;
}
.brand-title {
  display: flex;
  align-items: baseline;
  height: 40px;
  line-height: 40px;
  font-size: 29px;
  color: #c8c8c8;
}
.brand-ver {
  margin-left: 19px;
  font-size: 21.5px;
  color: #6e747d;
}
.brand-project {
  margin-top: 3px;
  font-size: 25px;
  line-height: 30px;
  font-weight: 500;
  color: #6e747d;
}
.top-tools {
  flex: none;
  box-sizing: border-box;
  width: 1064px;
  height: 64px;
  padding-left: 33px;
  border-left: 2px solid #23282f;
  display: flex;
  align-items: center;
  gap: 26px;
}
.top-tools .ic { color: #9a9ea4; stroke-width: 1.8; }
.device-group {
  flex: none;
  box-sizing: border-box;
  width: 411px;
  height: 83px;
  border: 3px solid #20252c;
  border-radius: 26px;
  padding: 3px;
  display: flex;
  align-items: center;
}
.device-btn {
  flex: none;
  width: 72px;
  height: 72px;
  display: flex;
  align-items: center;
  justify-content: center;
  border-radius: 20px;
}
.device-btn.active { background: #20252c; }
.device-btn.active .ic { color: #c8c8c8; }
.ic-dev-phone { width: 22px; height: 34px; }
.ic-dev-tablet { width: 29px; height: 38px; }
.ic-dev-desk { width: 38px; height: 38px; }
.device-size {
  margin-left: 16px;
  width: 124px;
  display: flex;
  flex-direction: column;
  gap: 5px;
  font-size: 21px;
  line-height: 29px;
  color: #62686f;
}
.device-size b {
  font-size: 23px;
  font-weight: 500;
  color: #b8b8b8;
}
.device-group > .ic { margin-left: 1px; }
.top-right {
  margin-left: auto;
  padding-right: 7px;
  display: flex;
  align-items: center;
}
.pill {
  box-sizing: border-box;
  height: 63px;
  border: 2px solid #262b33;
  border-radius: 32px;
  display: flex;
  align-items: center;
  margin-right: 18px;
}
.pill-version {
  width: 105px;
  margin-right: 17px;
  padding-left: 16px;
  gap: 13px;
  font-size: 25px;
  color: #b8b8b8;
}
.ic-chev { width: 30px; height: 18px; color: #b8b8b8; stroke-width: 2; }
.pill-chat { width: 123px; padding-left: 8px; gap: 15px; }
.pill-bolt { width: 124px; padding-left: 7px; gap: 19px; }
.pill-bug { width: 167px; padding-left: 8px; gap: 7px; }
.pill .ic-36 { color: #b8b8b8; }
.dot {
  flex: none;
  width: 42px;
  height: 42px;
  border-radius: 50%;
  display: flex;
  align-items: center;
  justify-content: center;
  font-size: 25px;
  font-weight: 700;
  color: #c8c8c8;
}
.dot-teal { background: #269c8a; }
.dot-orange { background: #b87a27; }
.dot-red { background: #a92e32; }
.dot .ic { color: #d0d0d0; stroke-width: 2.2; }
.pill-bug .ic-36 { margin-left: 5px; }
.square {
  box-sizing: border-box;
  width: 71px;
  height: 71px;
  border: 2px solid #262b33;
  border-radius: 22px;
  margin-right: 17px;
  display: flex;
  align-items: center;
  justify-content: center;
}
.square .ic { color: #b8b8b8; }
.square-share { margin-right: 16px; }
.square-eye {
  width: 72px;
  border: 3px solid #b0694a;
  background: #523427;
}
.run-btn {
  box-sizing: border-box;
  width: 125px;
  height: 71px;
  border: 3px solid #239180;
  border-radius: 22px;
  display: flex;
  overflow: hidden;
  background: #15292d;
}
.run-strip { width: 20px; background: #1c6259; }
.run-bolt {
  width: 49px;
  background: #163034;
  border-right: 2px solid #239180;
  display: flex;
  align-items: center;
  justify-content: center;
}
.ic-flash { width: 20px; height: 34px; color: #9a9ea4; }
.run-more {
  flex: 1;
  display: flex;
  align-items: center;
  justify-content: center;
}
.ic-run-chev { width: 20px; height: 12px; color: #b8b8b8; stroke-width: 2.4; }

/* main row */
.main {
  flex: 1;
  display: flex;
  min-height: 0;
}

/* left rail */
.rail {
  flex: none;
  box-sizing: border-box;
  width: 104px;
  border-right: 4px solid #14181c;
  background: #0e1216;
  display: flex;
  flex-direction: column;
  align-items: center;
  padding-top: 14px;
}
.rail-label {
  height: 30px;
  line-height: 30px;
  font-size: 21px;
  font-weight: 700;
  color: #6e747d;
}
.rail-item {
  flex: none;
  width: 100px;
  height: 92px;
  display: flex;
  align-items: center;
  justify-content: center;
}
.rail-add { height: 90px; margin-top: 8px; }
.rail-active {
  flex: none;
  width: 76px;
  height: 76px;
  margin-top: 6px;
  border-radius: 20px;
  background: linear-gradient(160deg, #3f2fc0, #35289f);
  display: flex;
  align-items: center;
  justify-content: center;
}
.rail-active .ic { color: #c8c8c8; width: 40px; height: 40px; }
.rail-board { height: 108px; }
.rail-rule {
  flex: none;
  align-self: flex-start;
  width: 96px;
  height: 2px;
  background: #262b33;
}
.rail-connect { margin: 18px 0 11px; }
.ic-cloud { width: 46px; height: 40px; }

/* left panel */
.left-panel {
  flex: none;
  width: 560px;
  display: flex;
  flex-direction: column;
  background: #0e1216;
}
.pages-section {
  flex: none;
  height: 537px;
  background: #14181c;
}
.pages-tabs {
  box-sizing: border-box;
  height: 104px;
  padding: 0 20px 0 24px;
  display: flex;
  align-items: center;
  justify-content: space-between;
}
.seg {
  box-sizing: border-box;
  width: 252px;
  height: 72px;
  padding: 4px;
  border-radius: 20px;
  background: #20252d;
  display: flex;
}
.seg-btn {
  width: 84px;
  display: flex;
  align-items: center;
  justify-content: center;
  border-radius: 16px;
}
.seg-btn:nth-child(2) { width: 88px; }
.seg-btn:nth-child(3) { width: 72px; }
.seg-btn.active { background: #0a0c0f; }
.seg-btn.active .ic { color: #b8b8b8; }
.folder-btn {
  box-sizing: border-box;
  width: 68px;
  height: 68px;
  border: 3px solid #23282f;
  border-radius: 22px;
  display: flex;
  align-items: center;
  justify-content: center;
}
.search-row {
  box-sizing: border-box;
  height: 75px;
  border-top: 3px solid #0c0f12;
  border-bottom: 3px solid #0c0f12;
  padding: 0 32px 0 40px;
  display: flex;
  align-items: center;
  justify-content: space-between;
  font-size: 26px;
  color: #62686f;
}
.pages-head {
  box-sizing: border-box;
  height: 57px;
  padding-left: 20px;
  display: flex;
  align-items: center;
  font-size: 27px;
  color: #b8b8b8;
}
.ic-folder { width: 34px; height: 30px; margin-right: 13px; stroke-width: 1.8; }
.count {
  box-sizing: border-box;
  width: 30px;
  height: 30px;
  margin-left: 12px;
  border: 2px solid #b8b8b8;
  border-radius: 50%;
  font-size: 17px;
  font-weight: 700;
  line-height: 26px;
  text-align: center;
}
.page-row {
  box-sizing: border-box;
  height: 52px;
  padding: 0 0 2px 40px;
  display: flex;
  align-items: center;
  gap: 18px;
  font-size: 25.5px;
  color: #62686f;
}
.page-row.active {
  background: #20252d;
  color: #b8b8b8;
  font-weight: 700;
  font-size: 26px;
}
.page-row.active .ic { color: #b8b8b8; }
.split {
  flex: none;
  height: 25px;
  background: #23282f;
  display: flex;
  align-items: center;
  justify-content: center;
}
.split span {
  width: 60px;
  height: 9px;
  border-radius: 5px;
  background: #6a7280;
}

/* widget tree */
.tree-section {
  flex: 1;
  background: #0e1216;
}
.tree-head {
  box-sizing: border-box;
  height: 122px;
  padding: 8px 30px 0 22px;
  display: flex;
  align-items: center;
}
.ic-tree { width: 37px; height: 34px; stroke-width: 1.7; }
.tree-title {
  margin: 0 20px 0 32px;
  font-size: 28px;
  font-weight: 700;
  color: #6e747d;
}
.tree-head-tools {
  margin-left: auto;
  display: flex;
  align-items: center;
  gap: 38px;
}
.ic-collapse { width: 40px; height: 28px; margin-left: -6px; }
.search-widget {
  height: 73px;
  border: 0;
  background: #14181c;
}
.tree {
  position: relative;
  padding-top: 24px;
}
.tree-row {
  box-sizing: border-box;
  height: 64px;
  display: flex;
  align-items: center;
  font-size: 24px;
  color: #6a7079;
}
.lv0 { padding-left: 23px; }
.lv1 { padding-left: 43px; }
.lv2 { padding-left: 63px; }
.tree-ic {
  flex: none;
  width: 36px;
  margin-right: 18px;
  display: flex;
  align-items: center;
  justify-content: center;
}
.tree-row.active {
  background: #1f3d40;
  border-radius: 20px;
  color: #c8c8c8;
  font-weight: 700;
}
.tree-row.active .ic { color: #c0c4c8; }
.tree-row.active .tree-ic .ic { color: #d0d0d0; }
.tree-row .ic-flow { width: 32px; height: 28px; margin-left: 18px; color: #2e9c8b; stroke-width: 1.7; }
.tree-row.active .ic-flow { color: #2e9c8b; }
.tree-row .flow-near { margin-left: 11px; }
.tree-row.active .ic-gen { width: 24px; height: 30px; margin-left: 26px; color: #a3583f; }
.tree-row .ic-row-eye { width: 30px; height: 20px; margin-left: 13px; stroke-width: 2; }
.row-end {
  margin-left: auto;
  padding-right: 28px;
  display: flex;
  align-items: center;
}
.ic-row-add { width: 34px; height: 34px; }
.caret {
  width: 0;
  height: 0;
  margin-left: 31px;
  border-left: 6px solid transparent;
  border-right: 6px solid transparent;
  border-top: 6px solid #6e747d;
}
.tree-row.active .caret { border-top-color: #c8c8c8; }
.tree-row .ic-tree-phone { width: 22px; height: 36px; }
.ic-appbar { width: 36px; height: 14px; }
.ic-tt { width: 34px; height: 27px; }
.ic-lines { width: 30px; height: 20px; }
.ic-tile { width: 29px; height: 28px; }
.tree-line {
  position: absolute;
  width: 2px;
  background: #262b33;
}
.line-root { left: 21px; top: 64px; height: 447px; background: #3a4048; }
.line-a { left: 41px; top: 127px; height: 128px; }
.line-b { left: 41px; top: 325px; height: 57px; }
.line-c { left: 41px; top: 448px; height: 63px; }

/* gutter between the panel and the canvas */
.gutter {
  flex: none;
  width: 20px;
  background: #222830;
}
.gutter span {
  display: block;
  width: 10px;
  height: 57px;
  margin: 881px 0 0 6px;
  border-radius: 5px;
  background: #6a7078;
}

/* canvas */
.canvas {
  position: relative;
  flex: none;
  width: 2552px;
  background: #161a1e;
}
.canvas-tools {
  box-sizing: border-box;
  height: 88px;
  padding: 16px 16px 0;
  display: flex;
  align-items: flex-start;
}
.tool-box {
  box-sizing: border-box;
  height: 72px;
  border-radius: 22px;
  background: #0e1216;
  display: flex;
  align-items: center;
  justify-content: center;
}
.tool-collapse { width: 72px; }
.ic-collapse-left { width: 28px; height: 34px; color: #6e747d; }
.tool-zoom {
  width: 208px;
  margin-left: 16px;
  justify-content: space-between;
  padding: 0 13px;
  font-size: 33px;
  color: #b8b8b8;
}
.zoom-sign { font-size: 46px; font-weight: 400; color: #8a8f96; width: 32px; text-align: center; }
.tool-dup {
  box-sizing: border-box;
  width: 68px;
  height: 68px;
  margin: 2px 0 0 16px;
  border: 3px solid #239180;
  border-radius: 20px;
  background: #1f4d4b;
  display: flex;
  align-items: center;
  justify-content: center;
}
.tool-dup .ic, .tool-ai .ic { color: #b8b8b8; }
.tool-ai {
  box-sizing: border-box;
  width: 72px;
  height: 72px;
  margin-left: 16px;
  padding: 3px;
  border-radius: 22px;
  background: linear-gradient(35deg, #b0694a, #8a4f90 50%, #4533c0);
}
.tool-ai-in {
  height: 100%;
  border-radius: 19px;
  background: #14181c;
  display: flex;
  align-items: center;
  justify-content: center;
}
.tool-preview {
  width: 380px;
  margin-left: auto;
  gap: 0;
  justify-content: space-around;
  padding: 0 4px;
}
.tool-nodes { width: 72px; margin-left: 16px; }
.ic-sun { width: 36px; height: 36px; }
.ic-dev-tablet2 { width: 25px; height: 44px; }
.ic-resp { width: 28px; height: 46px; stroke-width: 2.2; }
.ic-kb { width: 36px; height: 30px; }
.ic-ts { width: 32px; height: 30px; }
.ic-nodes { width: 36px; height: 42px; stroke-width: 2; }

/* phone preview */
.stage {
  padding: 62px 0 0 925px;
  display: flex;
}
.phone {
  position: relative;
  flex: none;
  width: 702px;
  height: 1519px;
  border-radius: 16px 16px 20px 20px;
  background: #adaeb0;
  box-shadow: 0 6px 20px rgba(0, 0, 0, 0.35);
}
.appbar {
  position: relative;
  box-sizing: border-box;
  height: 186px;
  padding-top: 110px;
  border-radius: 16px 16px 0 0;
  background: #3628aa;
}
.back {
  position: absolute;
  left: 32px;
  top: 118px;
  width: 38px;
  height: 30px;
  fill: none;
  stroke: #b5b5b5;
  stroke-width: 3.5;
  stroke-linecap: round;
  stroke-linejoin: round;
}
.appbar-title {
  height: 50px;
  line-height: 50px;
  text-align: center;
  font-size: 40.5px;
  color: #b5b5b5;
}
.listview-tag {
  position: absolute;
  left: 1px;
  bottom: 0;
  box-sizing: border-box;
  width: 95px;
  height: 36px;
  border-radius: 8px 8px 0 0;
  background: #1c6b5e;
  text-align: center;
  font-size: 22px;
  line-height: 36px;
  color: #b5cfc9;
}
.list-frame {
  box-sizing: border-box;
  height: 1270px;
  border: 3px solid #1e7567;
}
.list-rows {
  height: 458px;
  background: #b5b5b5;
}
.list-item {
  box-sizing: border-box;
  height: 115px;
  padding: 15px 35px 0 25px;
  display: flex;
  align-items: flex-start;
  justify-content: space-between;
}
.list-item:first-child {
  height: 113px;
  padding-top: 12px;
}
.item-title {
  font-size: 40px;
  line-height: 48px;
  color: #0b0e11;
}
.item-sub {
  font-size: 28px;
  line-height: 34px;
  color: #3f4650;
}
.chev {
  width: 18px;
  height: 30px;
  margin-top: 25px;
  fill: none;
  stroke: #3f4650;
  stroke-width: 2.6;
  stroke-linecap: round;
  stroke-linejoin: round;
}
.dim .item-title { color: #66696c; }
.dim .item-sub { color: #888a8d; }
.dim .chev { stroke: #85878a; }
.fab {
  position: absolute;
  left: 573px;
  top: 1389px;
  width: 101px;
  height: 101px;
  border-radius: 50%;
  background: #3628aa;
  box-shadow: 0 4px 18px rgba(0, 0, 0, 0.3);
  display: flex;
  align-items: center;
  justify-content: center;
}
.fab svg {
  width: 26px;
  height: 26px;
  fill: none;
  stroke: #b5b5b5;
  stroke-width: 2.4;
}
.side-btns {
  flex: none;
  height: 1519px;
  margin-left: 28px;
  display: flex;
  flex-direction: column;
  justify-content: space-between;
}
.side-btn {
  width: 60px;
  height: 60px;
  border-radius: 16px;
  background: #20252c;
  display: flex;
  align-items: center;
  justify-content: center;
}
.side-btn .ic { color: #c0c0c0; }
.ic-appbar2 { width: 30px; height: 12px; }
.ic-botbar { width: 30px; height: 24px; }

/* set variable popover */
.popover {
  position: absolute;
  left: 1910px;
  top: 470px;
  box-sizing: border-box;
  width: 620px;
  height: 960px;
  display: flex;
  flex-direction: column;
  border: 4px solid #323a46;
  border-radius: 20px;
  background: #14181c;
}
.pop-handle {
  position: absolute;
  left: 284px;
  width: 40px;
  height: 8px;
  border-radius: 4px;
  background: #98a2ae;
}
.pop-handle-top { top: -7px; }
.pop-handle-bottom { bottom: -7px; }
.pop-caret {
  position: absolute;
  left: 100%;
  top: 111px;
  width: 0;
  height: 0;
  border-left: 37px solid #323a46;
  border-top: 25px solid transparent;
  border-bottom: 25px solid transparent;
}
.pop-head {
  box-sizing: border-box;
  height: 117px;
  padding: 23px 0 0 24px;
  background: #282e38;
  border-radius: 16px 16px 0 0;
  border-bottom: 3px solid #323a46;
}
.pop-small {
  font-size: 24.5px;
  line-height: 32px;
  color: #8a93a0;
}
.pop-type {
  margin-top: 3px;
  font-size: 28px;
  line-height: 36px;
  font-weight: 700;
  color: #f2f2f2;
}
.pop-var {
  box-sizing: border-box;
  height: 169px;
  padding: 29px 43px 0 24px;
  background: #282e38;
  border-bottom: 4px solid #323a46;
  display: flex;
  justify-content: space-between;
}
.pop-state {
  margin-top: 8px;
  font-size: 28.5px;
  line-height: 36px;
  font-weight: 700;
  color: #f2f2f2;
}
.pop-name {
  margin-top: 7px;
  font-size: 25px;
  line-height: 32px;
  font-weight: 700;
  color: #e5845c;
}
.pop-var-tools {
  display: flex;
  align-items: flex-start;
  gap: 32px;
  color: #98a2ae;
}
.pop-var-tools .ic { color: #98a2ae; }
.dots {
  display: flex;
  flex-direction: column;
  gap: 3px;
  margin-top: 6px;
}
.dots i {
  width: 6px;
  height: 6px;
  border-radius: 50%;
  background: #98a2ae;
}
.pop-body {
  flex: 1;
  display: flex;
  flex-direction: column;
  padding: 28px 28px 28px 29px;
}
.pop-label {
  display: flex;
  align-items: center;
  gap: 11px;
  font-size: 25.5px;
  line-height: 30px;
  color: #7a818b;
}
.pop-select {
  box-sizing: border-box;
  height: 66px;
  margin-top: 11px;
  padding: 0 36px 2px 30px;
  border: 2px solid #323a46;
  border-radius: 16px;
  display: flex;
  align-items: center;
  justify-content: space-between;
  font-size: 29px;
  font-weight: 700;
  color: #f2f2f2;
}
.ic-pop-chev { width: 24px; height: 14px; color: #98a2ae; }
.pop-actions {
  margin-top: auto;
  display: flex;
  justify-content: flex-end;
  gap: 22px;
}
.btn {
  box-sizing: border-box;
  height: 72px;
  display: flex;
  align-items: center;
  justify-content: center;
  border-radius: 16px;
  font-size: 27px;
  font-weight: 700;
  color: #fff;
}
.btn-outline { width: 136px; border: 2px solid #323a46; }
.btn-primary { width: 154px; background: #4b39ef; box-shadow: 0 4px 12px rgba(0, 0, 0, 0.35); }

/* right panel */
.right-panel {
  flex: 1;
  box-sizing: border-box;
  padding: 0 14px 0 24px;
  background: #0e1216;
}
.rp-head {
  box-sizing: border-box;
  height: 118px;
  padding-top: 12px;
  display: flex;
  justify-content: space-between;
}
.rp-kind {
  display: flex;
  align-items: center;
  height: 30px;
  margin-left: 3px;
  font-size: 27px;
  color: #b8b8b8;
}
.ic-rp-lines { width: 22px; height: 16px; margin-right: 17px; color: #b8b8b8; }
.rp-name {
  display: flex;
  align-items: center;
  gap: 28px;
  height: 40px;
  margin-top: 13px;
  font-size: 30px;
  color: #62686f;
}
.rp-head-btns {
  display: flex;
  gap: 13px;
  margin-top: 11px;
}
.rp-btn {
  box-sizing: border-box;
  width: 63px;
  height: 64px;
  border: 2px solid #262b33;
  border-radius: 20px;
  display: flex;
  align-items: center;
  justify-content: center;
}
.rp-btn .ic { color: #b8b8b8; }
.rp-tabs {
  box-sizing: border-box;
  height: 72px;
  padding: 4px 0;
  border-radius: 20px;
  background: #161a1e;
  display: grid;
  grid-template-columns: repeat(6, 1fr);
}
.rp-tab {
  margin: 0 5px;
  border-radius: 16px;
  display: flex;
  align-items: center;
  justify-content: center;
}
.rp-tab.active { background: #0a0c0f; }
.rp-tab.active .ic { color: #a8a8a8; }
.ic-rp { width: 38px; height: 38px; }
.ic-play { width: 19px; height: 25px; }
.rp-heading {
  margin: 30px 0 0;
  font-size: 28.5px;
  line-height: 30px;
  font-weight: 700;
  color: #b36b4a;
}
.rp-label {
  margin-top: 25px;
  display: flex;
  align-items: center;
  gap: 11px;
  height: 30px;
  font-size: 25px;
  line-height: 27px;
  color: #62686f;
}
.rp-label-first { margin-top: 25px; }
.field {
  box-sizing: border-box;
  height: 63px;
  margin-top: 10px;
  padding: 0 0 3px 34px;
  border: 2px solid #23282f;
  border-radius: 18px;
  display: flex;
  align-items: center;
  font-size: 27px;
  color: #c8c8c8;
}
.ph {
  font-style: italic;
  font-size: 30px;
  color: #565b62;
}
.field-value {
  padding: 0 18px 0 22px;
  background: #15191d;
}
.value-name {
  margin: 0 0 3px 22px;
  font-size: 26px;
  font-weight: 700;
  color: #b36b4a;
}
.field-edit { margin-left: auto; }
.rp-actions {
  margin-top: 61px;
  display: flex;
}
.rp-btn-lg {
  box-sizing: border-box;
  height: 80px;
  padding-bottom: 3px;
  border-radius: 16px;
  display: flex;
  align-items: center;
  justify-content: center;
  font-size: 26px;
  font-weight: 700;
  background: #23282f;
}
.rp-remove { width: 146px; color: #a3343a; margin-right: auto; }
.rp-cancel { width: 132px; color: #b8b8b8; margin-right: 16px; }
.rp-confirm { width: 146px; color: #c0c0c0; background: #b0694a; }

/* tutorial notes */
.notes-layer {
  position: absolute;
  left: 0;
  top: 0;
  width: 3826px;
  height: 1880px;
  pointer-events: none;
}
.note-box {
  fill: none;
  stroke: #fe2a00;
  stroke-width: 6;
}
.note-line {
  fill: none;
  stroke: #fe2a00;
  stroke-width: 6;
}
.note-head { fill: #fe2a00; }
.note {
  position: absolute;
  font-family: "Liberation Sans", Arial, sans-serif;
  font-size: 53px;
  font-weight: 700;
  line-height: 60px;
  white-space: nowrap;
  color: #f8ee00;
}
.note-1 { left: 802px; top: 1182px; }
.note-2 { left: 3236px; top: 1025px; }
.note-3 { left: 2350px; top: 672px; }

/* chat launcher */
.intercom {
  position: absolute;
  left: 3700px;
  top: 1786px;
  width: 96px;
  height: 96px;
  border-radius: 50%;
  background: #4b39ef;
  display: flex;
  align-items: center;
  justify-content: center;
}
.intercom svg { width: 42px; height: 50px; }
```
